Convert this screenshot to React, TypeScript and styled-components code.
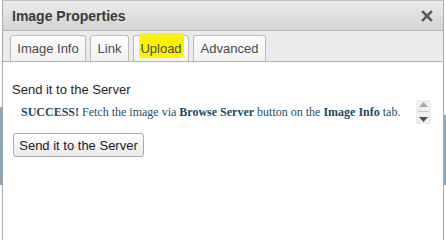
import React from "react";
import styled, { createGlobalStyle } from "styled-components";

const Global = createGlobalStyle`
  html, body { margin: 0; padding: 0; background: #fff; }
  body { font-family: "Liberation Sans", Arial, sans-serif; }
  * { box-sizing: border-box; }
`;

const Page = styled.div`
  display: grid;
  grid-template-columns: 2px 1fr 2px;
  width: 446px;
  height: 240px;
  overflow: hidden;
`;

const Gutter = styled.div<{ $top: number; $len: number }>`
  display: flex;
  flex-direction: column;
  &::before { content: ""; height: ${(p) => p.$top}px; }
  &::after { content: ""; height: ${(p) => p.$len}px; background: #8ea6b9; }
`;

const Dialog = styled.div`
  display: flex;
  flex-direction: column;
  border-left: 1px solid #a9a9a9;
  border-right: 1px solid #a9a9a9;
  border-top: 1px solid #c4c4c4;
  background: #fff;
`;

const TitleBar = styled.div`
  height: 30px;
  display: flex;
  align-items: center;
  justify-content: space-between;
  padding: 0 10px 0 9px;
  background: linear-gradient(#ececec, #d2d4d1);
  border-bottom: 1px solid #b6b6b6;
`;

const Title = styled.div`
  font-size: 14px;
  font-weight: bold;
  color: #3a3a3a;
`;

const Close = styled.svg`
  width: 12px;
  height: 12px;
  display: block;
`;

const TabStrip = styled.div`
  height: 31px;
  display: flex;
  align-items: flex-end;
  gap: 4px;
  padding-left: 7px;
  background: #ebebeb;
  border-bottom: 1px solid #b3b3b3;
`;

const Tab = styled.div<{ $w: number }>`
  position: relative;
  width: ${(p) => p.$w}px;
  height: 26px;
  display: flex;
  align-items: center;
  justify-content: center;
  font-size: 13px;
  color: #4a4a4a;
  border: 1px solid #bcbcbc;
  border-bottom: none;
  border-radius: 3px 3px 0 0;
  background: linear-gradient(#fdfdfd, #f1f1f1);
`;

const Highlight = styled.span`
  position: absolute;
  left: 5px;
  right: 4px;
  top: -3px;
  bottom: 3px;
  background: #fdf20a;
  border-radius: 3px;
`;

const TabLabel = styled.span`
  position: relative;
`;

const Body = styled.div`
  display: flex;
  flex-direction: column;
  align-items: flex-start;
  padding: 20px 0 0 9px;
`;

const Label = styled.div`
  font-size: 13px;
  color: #1e1e1e;
  line-height: 15px;
`;

const Frame = styled.div`
  margin-top: 3px;
  width: 419px;
  height: 24px;
  display: flex;
  align-items: center;
`;

const Message = styled.div`
  flex: 1;
  overflow: hidden;
  font-family: "Liberation Serif", "Times New Roman", serif;
  font-size: 12px;
  color: #1b5069;
  padding-left: 9px;
  white-space: nowrap;
  b { color: #1b4b63; }
`;

const Scroll = styled.div`
  flex: none;
  width: 15px;
  height: 24px;
  background: #efefef;
  display: flex;
  flex-direction: column;
  align-items: center;
  justify-content: space-around;
`;

const Button = styled.button`
  margin-top: 9px;
  margin-left: 1px;
  width: 131px;
  height: 24px;
  font-family: "Liberation Sans", Arial, sans-serif;
  font-size: 13px;
  color: #222;
  border: 1px solid #acacac;
  border-radius: 3px;
  background: linear-gradient(#ffffff, #e9e9e9);
  padding: 0;
`;

export default function App() {
  return (
    <>
      <Global />
      <Page>
        <Gutter $top={107} $len={78} />
        <Dialog>
          <TitleBar>
            <Title>Image Properties</Title>
            <Close viewBox="0 0 12 12">
              <path d="M2 2 L10 10 M10 2 L2 10" stroke="#5a5a5a" strokeWidth="2.6" strokeLinecap="square" />
            </Close>
          </TitleBar>
          <TabStrip>
            <Tab $w={76}><TabLabel>Image Info</TabLabel></Tab>
            <Tab $w={39}><TabLabel>Link</TabLabel></Tab>
            <Tab $w={56}>
              <Highlight />
              <TabLabel>Upload</TabLabel>
            </Tab>
            <Tab $w={73}><TabLabel>Advanced</TabLabel></Tab>
          </TabStrip>
          <Body>
            <Label>Send it to the Server</Label>
            <Frame>
              <Message>
                <b>SUCCESS!</b> Fetch the image via <b>Browse Server</b> button on the <b>Image Info</b> tab.
              </Message>
              <Scroll>
                <svg width="9" height="5" viewBox="0 0 9 5"><path d="M0 5 L4.5 0 L9 5 Z" fill="#a8a8a8" /></svg>
                <svg width="11" height="1" viewBox="0 0 11 1"><rect width="11" height="1" fill="#c8c8c8" /></svg>
                <svg width="9" height="5" viewBox="0 0 9 5"><path d="M0 0 L9 0 L4.5 5 Z" fill="#505050" /></svg>
              </Scroll>
            </Frame>
            <Button>Send it to the Server</Button>
          </Body>
        </Dialog>
        <Gutter $top={115} $len={70} />
      </Page>
    </>
  );
}
